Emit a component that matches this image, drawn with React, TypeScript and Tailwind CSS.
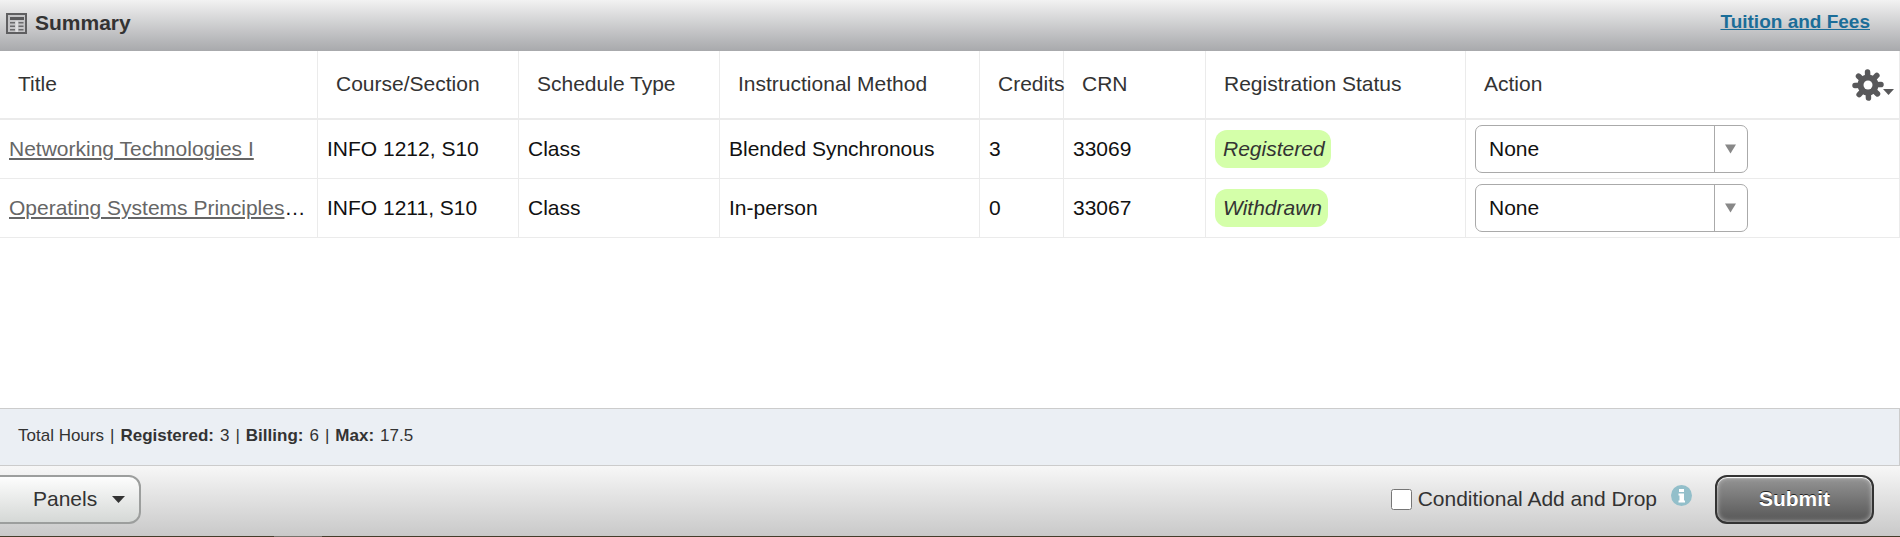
import React, { useState } from 'react';

interface Course {
  crn: string;
  title: string;
  truncated?: boolean;
  section: string;
  scheduleType: string;
  method: string;
  credits: number;
  status: string;
}

const courses: Course[] = [
  {
    crn: '33069',
    title: 'Networking Technologies I',
    section: 'INFO 1212, S10',
    scheduleType: 'Class',
    method: 'Blended Synchronous',
    credits: 3,
    status: 'Registered',
  },
  {
    crn: '33067',
    title: 'Operating Systems Principles',
    truncated: true,
    section: 'INFO 1211, S10',
    scheduleType: 'Class',
    method: 'In-person',
    credits: 0,
    status: 'Withdrawn',
  },
];

const headers = [
  'Title',
  'Course/Section',
  'Schedule Type',
  'Instructional Method',
  'Credits',
  'CRN',
  'Registration Status',
];

const totals = [
  { label: 'Registered:', value: '3' },
  { label: 'Billing:', value: '6' },
  { label: 'Max:', value: '17.5' },
];

const th = 'border-r border-b-2 border-[#ebebeb] pl-[18px] text-left font-normal whitespace-nowrap text-[#333]';
const td = 'border-r border-b border-[#ebebeb] pl-[9px] whitespace-nowrap text-[#111]';

function SummaryIcon() {
  return (
    <svg className="h-[21px] w-[21px]" viewBox="0 0 21 21" aria-hidden="true">
      <rect x="1" y="1" width="19" height="19" fill="#c4c4c6" stroke="#5f5f61" strokeWidth="2" />
      <rect x="4" y="4" width="14" height="3" fill="#5a5a5c" />
      <g fill="#6b6b6d">
        <rect x="4" y="9" width="5" height="1.5" />
        <rect x="4" y="12.5" width="5" height="1.5" />
        <rect x="4" y="16" width="5" height="1.5" />
        <rect x="12.5" y="9" width="5" height="1.5" />
        <rect x="12.5" y="12.5" width="5" height="1.5" />
        <rect x="12.5" y="16" width="5" height="1.5" />
      </g>
      <rect x="9.5" y="8" width="2.5" height="11" fill="#dedee0" />
    </svg>
  );
}

function GearIcon() {
  return (
    <svg className="h-8 w-[42px]" viewBox="0 0 42 32" aria-hidden="true">
      <g stroke="#58585a" strokeWidth="5.5" strokeLinecap="round">
        {[0, 45, 90, 135].map(angle => (
          <line key={angle} x1="16" y1="3" x2="16" y2="29" transform={`rotate(${angle - 2} 16 16)`} />
        ))}
      </g>
      <circle cx="16" cy="16" r="10.5" fill="#58585a" />
      <circle cx="16" cy="16" r="4.5" fill="#fff" />
      <path d="M31 20h11l-5.5 6z" fill="#58585a" />
    </svg>
  );
}

function InfoIcon() {
  return (
    <svg className="h-[21px] w-[21px]" viewBox="0 0 21 21" aria-hidden="true">
      <circle cx="10.5" cy="10.5" r="10.5" fill="#93bfca" />
      <rect x="8" y="4" width="5" height="3" fill="#fff" />
      <path d="M7.5 8.5H13V15.5h1V17.5H7.5V15.5H8.500V10.5H7.5z" fill="#fff" />
    </svg>
  );
}

function ActionSelect({ crn }: { crn: string }) {
  return (
    <div className="relative h-12 w-[273px]">
      <select
        aria-label={`Action for ${crn}`}
        className="h-full w-full appearance-none rounded-[7px] border border-[#aaa] bg-white pl-[13px] text-[21px] text-[#111]"
      >
        <option>None</option>
      </select>
      <span className="pointer-events-none absolute inset-y-px right-px flex w-[33px] items-center justify-center border-l border-[#aaa] pr-[2px]">
        <svg className="h-[10px] w-[11px]" viewBox="0 0 11 10" aria-hidden="true">
          <path d="M0 0.5h11L5.5 9.5z" fill="#888" />
        </svg>
      </span>
    </div>
  );
}

export default function App() {
  const [conditional, setConditional] = useState(false);

  return (
    <div className="flex min-h-screen flex-col bg-white font-['Liberation_Sans',Arial,sans-serif] text-[21px] leading-6 text-[#333]">
      <header className="flex h-[51px] items-center justify-between bg-linear-to-b from-[#f2f2f2] to-[#a8a9ac] pr-[30px] pb-1 pl-[6px]">
        <div className="flex items-center gap-2">
          <SummaryIcon />
          <h1 className="pb-[2px] font-bold">Summary</h1>
        </div>
        <a href="#fees" className="pb-1 text-[19px] font-bold text-[#1b6d98] underline">
          Tuition and Fees
        </a>
      </header>

      <main className="flex-1">
        <table className="w-full table-fixed border-separate border-spacing-0">
          <colgroup>
            <col className="w-[318px]" />
            <col className="w-[201px]" />
            <col className="w-[201px]" />
            <col className="w-[260px]" />
            <col className="w-[84px]" />
            <col className="w-[142px]" />
            <col className="w-[260px]" />
            <col />
          </colgroup>
          <thead>
            <tr className="h-[69px]">
              {headers.map(header => (
                <th key={header} className={th}>
                  <div className="pb-[2px]">{header}</div>
                </th>
              ))}
              <th className={th}>
                <div className="flex items-center justify-between pr-[5px]">
                  <span className="pb-[2px]">Action</span>
                  <button type="button" aria-label="Table settings">
                    <GearIcon />
                  </button>
                </div>
              </th>
            </tr>
          </thead>
          <tbody>
            {courses.map(course => (
              <tr key={course.crn} className="h-[59px]">
                <td className={td}>
                  <a href={`#${course.crn}`} className="text-[#666] underline decoration-2 underline-offset-2">
                    {course.title}
                  </a>
                  {course.truncated && '…'}
                </td>
                <td className={td}>{course.section}</td>
                <td className={td}>{course.scheduleType}</td>
                <td className={td}>{course.method}</td>
                <td className={td}>{course.credits}</td>
                <td className={td}>{course.crn}</td>
                <td className={td}>
                  <div className="flex">
                    <span className="rounded-xl bg-[#d4ffa9] py-[7px] pr-[6px] pl-2 text-[#333] italic">
                      {course.status}
                    </span>
                  </div>
                </td>
                <td className={td}>
                  <ActionSelect crn={course.crn} />
                </td>
              </tr>
            ))}
          </tbody>
        </table>
      </main>

      <section className="flex h-[58px] items-center gap-[6px] border-y border-r border-[#ccc] bg-[#ebeff4] pb-[2px] pl-[18px] text-[17px]">
        <span>Total Hours</span>
        {totals.map(total => (
          <React.Fragment key={total.label}>
            <span>|</span>
            <b>{total.label}</b>
            <span>{total.value}</span>
          </React.Fragment>
        ))}
      </section>

      <footer className="flex h-[70px] items-center justify-between bg-linear-to-b from-[#f7f7f7] to-[#c9c9c9] pr-[26px] pb-[3px]">
        <button
          type="button"
          className="-ml-4 flex h-[49px] items-center gap-[15px] rounded-xl border-2 border-[#9c9e9d] bg-linear-to-b from-[#fdfdfd] to-[#d5d8d6] pr-[14px] pl-[47px]"
        >
          <span className="pb-[2px]">Panels</span>
          <svg className="h-[7px] w-[13px]" viewBox="0 0 13 7" aria-hidden="true">
            <path d="M0 0h13L6.5 7z" fill="#333" />
          </svg>
        </button>

        <div className="flex items-center">
          <div className="flex items-center gap-[6px]">
            <input
              id="conditional"
              type="checkbox"
              checked={conditional}
              onChange={e => setConditional(e.target.checked)}
              className="h-[21px] w-[21px]"
            />
            <label htmlFor="conditional" className="pb-[2px]">Conditional Add and Drop</label>
          </div>
          <button type="button" aria-label="About conditional add and drop" className="mr-[23px] ml-[14px] pb-2">
            <InfoIcon />
          </button>
          <button
            type="button"
            className="h-[49px] w-[159px] rounded-xl border-2 border-[#333] bg-linear-to-b from-[#959595] to-[#575757] pb-[2px] font-bold text-white shadow-[inset_0_1px_1px_#fff,inset_0_0_5px_#ccc] text-shadow-[0_-1px_0_#222]"
          >
            Submit
          </button>
        </div>
      </footer>

      <div className="flex h-px bg-[#443d2a]">
        <div className="ml-[274px] w-12 bg-[#77736a]" />
      </div>
    </div>
  );
}
